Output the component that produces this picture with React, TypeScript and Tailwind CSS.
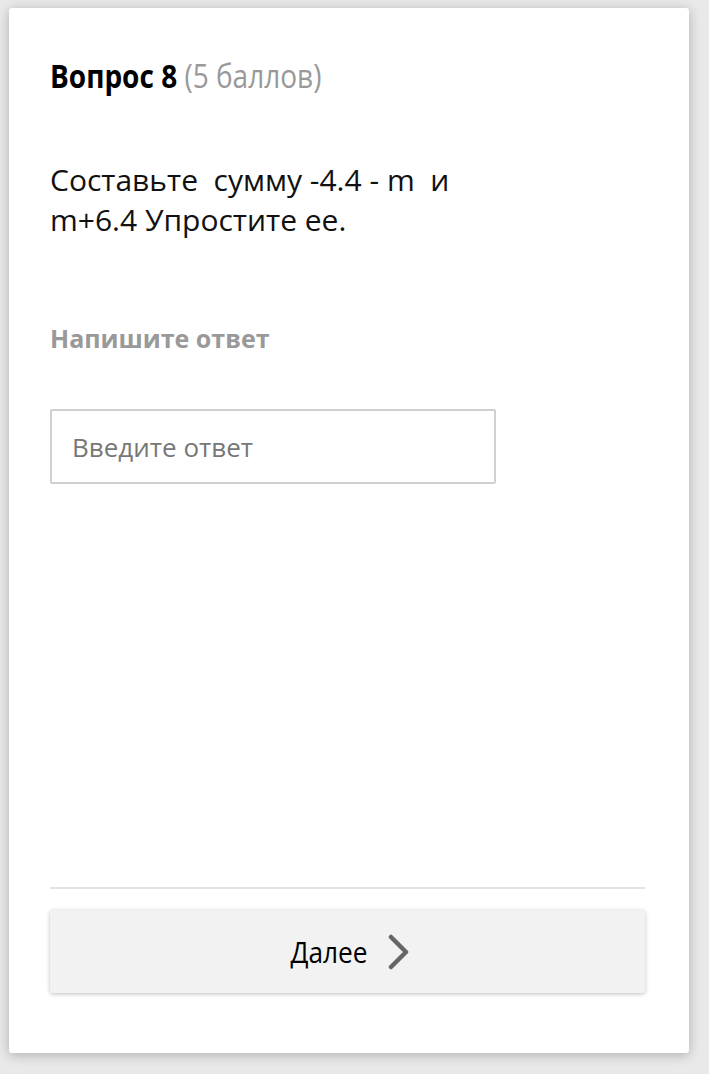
export default function App() {
    return (
        <div className="min-h-[1074px] bg-[#e9e9e9] pl-[9px] pr-[20px] pt-[8px] pb-[20px] font-['Open_Sans',sans-serif]">
            <div className="flex h-[1045px] w-[680px] flex-col rounded-[3px] bg-white pl-[41px] pr-[44px] pt-[48px] pb-[60px] shadow-[0_2px_12px_rgba(0,0,0,0.25)]">
                <h1 className="h-[40px] text-[32px] leading-[40px] whitespace-nowrap">
                    <span className="inline-block origin-left scale-x-[0.875]">
                        <span className="font-bold text-black">Вопрос 8</span>{' '}
                        <span className="font-normal text-[#999]">(5 баллов)</span>
                    </span>
                </h1>

                <p className="mt-[64px] w-[446px] text-[30px] leading-[40px] text-[#111]">
                    Составьте&nbsp; сумму -4.4 - m&nbsp; и m+6.4 Упростите ее.
                </p>

                <div className="mt-[83px] text-[25px] font-bold leading-[30px] text-[#999]">Напишите ответ</div>

                <input
                    type="text"
                    placeholder="Введите ответ"
                    className="mt-[56px] h-[75px] w-[446px] rounded-[2px] border-2 border-[#d0d0d0] px-[20px] text-[26px] text-[#333] outline-none placeholder:text-[#777]"
                />

                <div className="mt-auto border-t-2 border-[#e3e3e3]" />

                <button
                    type="button"
                    className="mt-[21px] flex h-[83px] w-full items-center justify-center gap-[15px] rounded-[3px] bg-[#f2f2f2] shadow-[0_1px_4px_rgba(0,0,0,0.25)]"
                >
                    <span className="inline-block scale-x-[0.875] text-[30px] leading-none text-black">Далее</span>
                    <svg width="22" height="36" viewBox="0 0 22 36" className="text-[#666]">
                        <polyline points="3,3 18,18 3,33" fill="none" stroke="currentColor" strokeWidth="4.5" strokeLinecap="round" strokeLinejoin="round" />
                    </svg>
                </button>
            </div>
        </div>
    );
}
